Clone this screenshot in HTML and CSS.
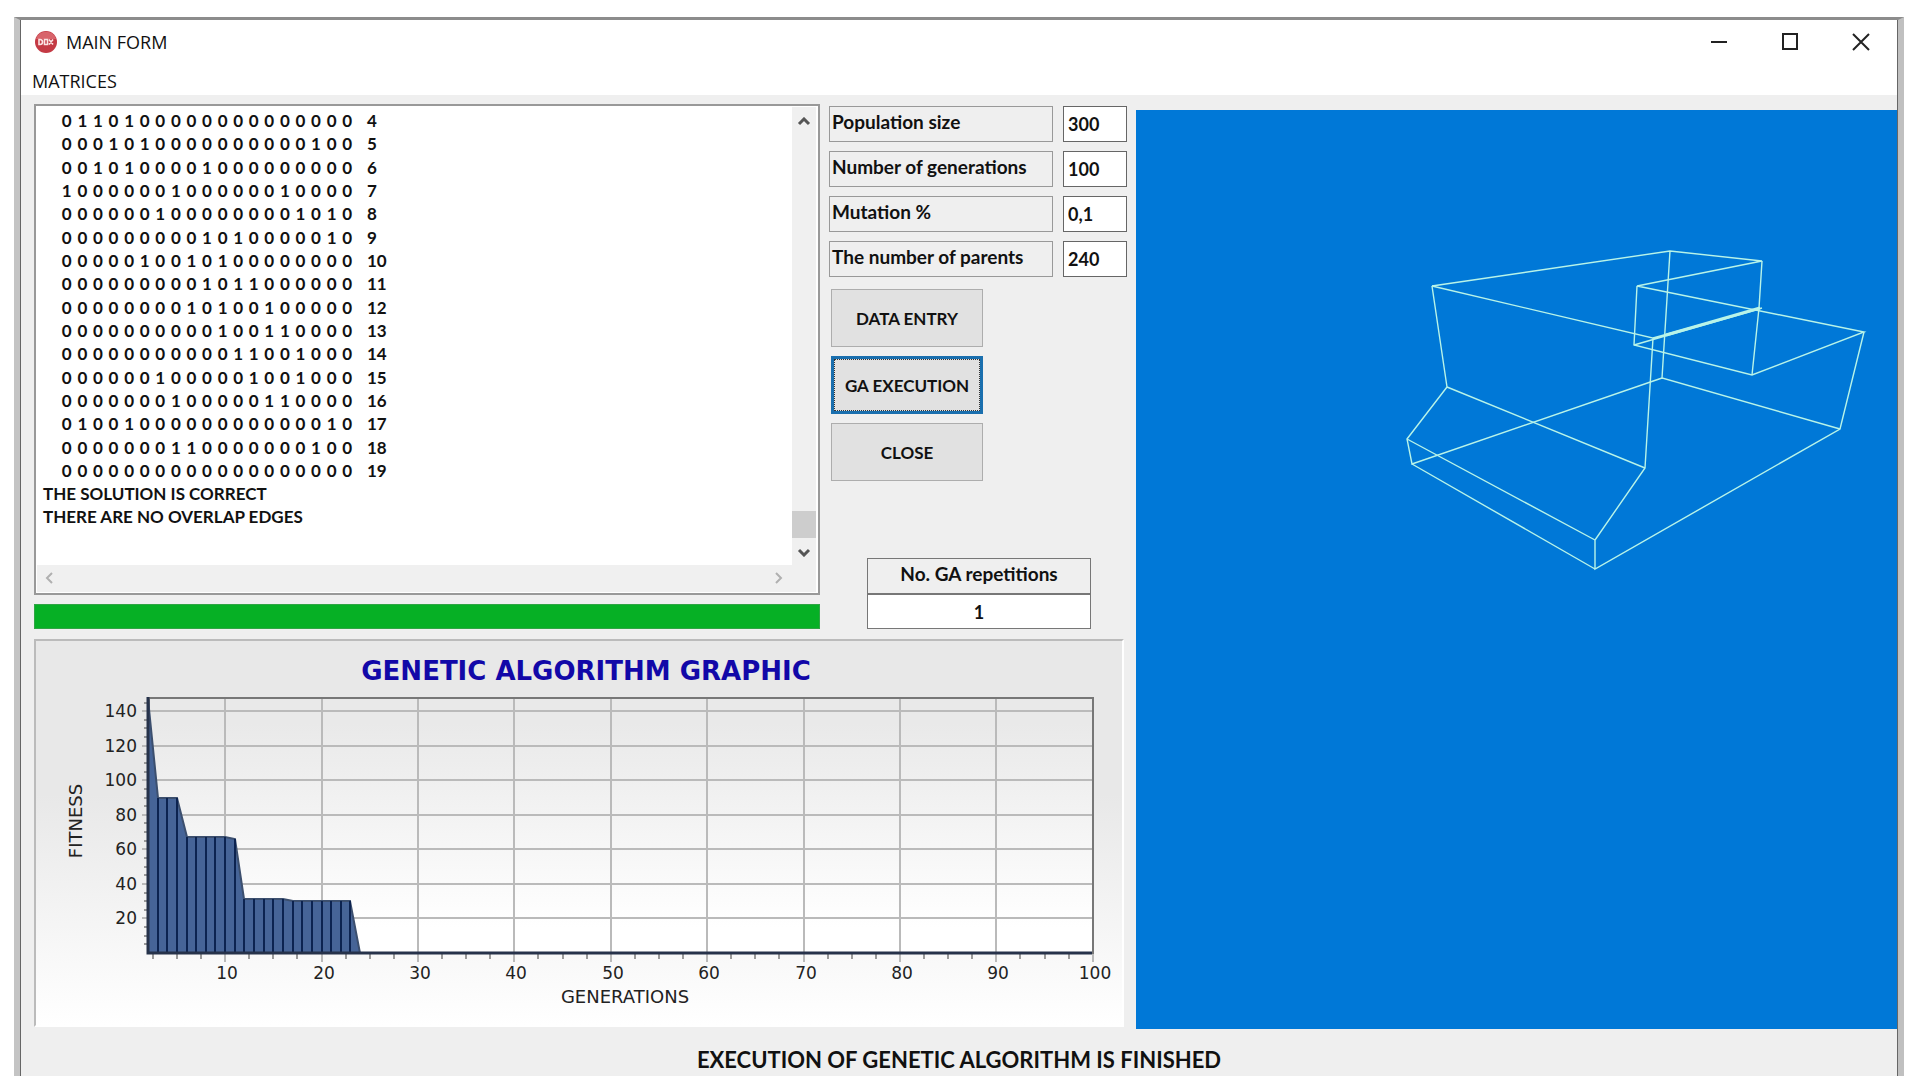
FILE: index.html
```
<!DOCTYPE html>
<html lang="en">
<head>
    <meta charset="UTF-8">
    <meta name="viewport" content="width=device-width, initial-scale=1.0">
    <title>MAIN FORM</title>
    <link rel="stylesheet" href="styles.css">
</head>
<body>
    <div class="window">
        <header class="title-bar">
            <svg class="app-icon" width="24" height="24" viewBox="0 0 24 24">
                <circle cx="12" cy="12" r="11" fill="#c43a44"/>
                <path d="M2 9a10.500 10.500 0 0 1 20 0z" fill="#d8646b"/>
                <path d="M5 9.500v5h1a2.500 2.500 0 0 0 0-5zM10.500 9.500h3v5h-3zM15 9.500l4 5M19 9.500l-4 5" fill="none" stroke="#fbe4e4" stroke-width="1.600"/>
            </svg>
            <h1>MAIN FORM</h1>
            <div class="window-buttons">
                <button type="button" aria-label="Minimize">
                    <svg width="18" height="18" viewBox="0 0 18 18"><path d="M1 9h16"/></svg>
                </button>
                <button type="button" aria-label="Maximize">
                    <svg width="18" height="18" viewBox="0 0 18 18"><path d="M2 1h14v15H2z"/></svg>
                </button>
                <button type="button" aria-label="Close">
                    <svg width="18" height="18" viewBox="0 0 18 18"><path d="M1 1l16 16M17 1L1 17"/></svg>
                </button>
            </div>
        </header>
        <nav class="menu">
            <button type="button">MATRICES</button>
        </nav>

        <main class="content">
            <div class="left">
                <div class="top">
                    <div class="output">
                        <div class="memo">
                            <div class="memo-text">
                                <table class="matrix" aria-label="Matrix">
                                    <tbody id="matrix"></tbody>
                                </table>
                                <p>THE SOLUTION IS CORRECT</p>
                                <p>THERE ARE NO OVERLAP EDGES</p>
                            </div>
                            <div class="scroll-v">
                                <svg width="14" height="9" viewBox="0 0 14 9"><path d="M2 7l5-5 5 5"/></svg>
                                <div class="thumb"></div>
                                <svg width="14" height="9" viewBox="0 0 14 9"><path d="M2 2l5 5 5-5"/></svg>
                            </div>
                            <div class="scroll-h">
                                <svg width="9" height="12" viewBox="0 0 9 12"><path d="M7 1L2 6l5 5"/></svg>
                                <svg width="9" height="12" viewBox="0 0 9 12"><path d="M2 1l5 5-5 5"/></svg>
                            </div>
                        </div>
                        <div class="progress" role="progressbar" aria-label="Progress" aria-valuenow="100"></div>
                    </div>

                    <form class="params">
                        <div class="field">
                            <label for="population">Population size</label>
                            <input type="text" id="population" value="300">
                        </div>
                        <div class="field">
                            <label for="generations">Number of generations</label>
                            <input type="text" id="generations" value="100">
                        </div>
                        <div class="field">
                            <label for="mutation">Mutation %</label>
                            <input type="text" id="mutation" value="0,1">
                        </div>
                        <div class="field">
                            <label for="parents">The number of parents</label>
                            <input type="text" id="parents" value="240">
                        </div>
                        <div class="actions">
                            <button type="button">DATA ENTRY</button>
                            <button type="button" class="active">GA EXECUTION</button>
                            <button type="button">CLOSE</button>
                        </div>
                        <div class="repetitions">
                            <label for="repetitions">No. GA repetitions</label>
                            <input type="text" id="repetitions" value="1">
                        </div>
                    </form>
                </div>

                <div class="chart">
                    <svg id="chart" viewBox="0 0 1086 384">
                        <defs>
                            <linearGradient id="wall" x1="0" y1="0" x2="0" y2="1">
                                <stop offset="0.1" stop-color="#e9e9e9"/>
                                <stop offset="0.9" stop-color="#fff"/>
                            </linearGradient>
                        </defs>
                        <text class="chart-title" x="550" y="39">GENETIC ALGORITHM GRAPHIC</text>
                        <rect x="113" y="57" width="944" height="255" fill="url(#wall)"/>
                        <g id="grid"></g>
                        <rect x="113" y="57" width="944" height="255" fill="none" stroke="#777" stroke-width="2"/>
                        <g id="series"></g>
                        <path d="M112 56v256h944" fill="none" stroke="#26324a" stroke-width="3"/>
                        <text class="axis" x="589" y="362">GENERATIONS</text>
                        <text class="axis" transform="translate(46 180) rotate(-90)">FITNESS</text>
                    </svg>
                </div>
            </div>

            <div class="view">
                <svg viewBox="0 0 761 919" preserveAspectRatio="xMinYMin meet">
                    <path d="M296 176L534 141 626 151 501 176 728 222 616 265 498 235 501 176"/>
                    <path d="M626 151L623 198 616 265M498 235L623 199M517 228L626 198"/>
                    <path class="overlap" d="M530 225L624 198"/>
                    <path d="M296 176L517 228 509 358 459 430V459L704 319 728 222"/>
                    <path d="M534 141L526 268 704 319M526 268L276 354 271 329 311 277 296 176"/>
                    <path d="M311 277L509 358M271 329L459 430M276 354L459 459"/>
                </svg>
            </div>
        </main>

        <footer class="status">EXECUTION OF GENETIC ALGORITHM IS FINISHED</footer>
    </div>

    <script>
        const rows = [
            ['0110100000000000000', 4],
            ['0001010000000000100', 5],
            ['0010100001000000000', 6],
            ['1000000100000010000', 7],
            ['0000001000000001010', 8],
            ['0000000001010000010', 9],
            ['0000010010100000000', 10],
            ['0000000001011000000', 11],
            ['0000000010100100000', 12],
            ['0000000000100110000', 13],
            ['0000000000011001000', 14],
            ['0000001000001001000', 15],
            ['0000000100000110000', 16],
            ['0100100000000000010', 17],
            ['0000000110000000100', 18],
            ['0000000000000000000', 19]
        ];

        const body = document.getElementById('matrix');
        rows.forEach(([bits, number]) => {
            const tr = body.insertRow();
            bits.split('').forEach(bit => {
                tr.insertCell().textContent = bit;
            });
            const th = document.createElement('th');
            th.scope = 'row';
            th.textContent = number;
            tr.appendChild(th);
        });

        // chart scales
        const x = g => Math.round(92.7 + g * 9.64);
        const y = v => Math.round(312 - v * 1.7275);
        const grid = document.getElementById('grid');
        const series = document.getElementById('series');
        let lines = '';

        for (let v = 5; v <= 145; v += 5) {
            if (v % 20 === 0) {
                lines += `<path class="grid-line" d="M106 ${y(v)}H1056"/>`;
                lines += `<text class="tick-y" x="101" y="${y(v) + 6}">${v}</text>`;
            } else {
                lines += `<path class="tick" d="M108 ${y(v)}h4"/>`;
            }
        }
        for (let g = 2.5; g <= 100; g += 2.5) {
            if (g % 10 === 0) {
                lines += `<path class="grid-line" d="M${x(g)} 58V321"/>`;
                lines += `<text class="tick-x" x="${x(g) + 2}" y="338">${g}</text>`;
            } else {
                lines += `<path class="tick" d="M${x(g)} 313v5"/>`;
            }
        }
        grid.innerHTML = lines;

        const fitness = [147, 90, 90, 90, 67, 67, 67, 67, 67, 66, 31, 31, 31, 31, 31, 30, 30, 30, 30, 30, 30, 30, 0];
        let area = `M${x(2)} ${y(0)}`;
        let bars = '';
        fitness.forEach((value, i) => {
            area += `L${x(i + 2)} ${y(value)}`;
            bars += `M${x(i + 2)} ${y(value)}V312`;
        });
        series.innerHTML = `<path class="area" d="${area}z"/><path class="bars" d="${bars}"/>`;
    </script>
</body>
</html>
```
FILE: styles.css
```
* {
    margin: 0;
    padding: 0;
    box-sizing: border-box;
}

body {
    background-color: #fff;
    min-height: 100vh;
    padding: 17px 13px 15px 14px;
    display: flex;
    font-family: Lato, Carlito, Calibri, sans-serif;
    color: #111;
}

button,
input {
    font: inherit;
    color: inherit;
}

.window {
    flex: 1;
    display: flex;
    flex-direction: column;
    background-color: #efefef;
    border-left: 6px solid #c4c4c4;
    border-right: 6px solid #c0c0c0;
    border-top: 3px solid #8c8c8c;
    box-shadow: inset 1px 0 #666, inset -1px 0 #666;
}

.title-bar {
    display: flex;
    align-items: center;
    height: 44px;
    margin: 0 1px;
    padding: 0 1px 0 13px;
    background-color: #fff;
}

.title-bar h1 {
    flex: 1;
    margin-left: 8px;
    font-family: "Open Sans", sans-serif;
    font-size: 18px;
    font-weight: 400;
}

.window-buttons {
    display: flex;
}

.window-buttons button {
    width: 71px;
    height: 44px;
    border: none;
    background: none;
}

.window-buttons svg {
    display: block;
    margin: 0 auto;
    fill: none;
    stroke: #222;
    stroke-width: 2;
}

.menu {
    height: 31px;
    margin: 0 1px;
    padding-left: 11px;
    background-color: #fff;
}

.menu button {
    border: none;
    background: none;
    font-family: "Open Sans", sans-serif;
    font-size: 18px;
    line-height: 34px;
}

.content {
    display: grid;
    grid-template-columns: 1093fr 761fr;
    gap: 9px;
    padding: 9px 1px 0 14px;
}

.left {
    min-width: 0;
}

.top {
    display: flex;
    gap: 9px;
    margin-bottom: 10px;
}

.output {
    flex: 1;
}

.memo {
    display: grid;
    grid-template-columns: 1fr 24px;
    grid-template-rows: 1fr 27px;
    height: 491px;
    padding: 1px 2px 1px 1px;
    background-color: #fff;
    border: 2px solid #999;
}

.memo-text {
    padding: 2px 6px;
    font-size: 17px;
    font-weight: 700;
    line-height: 23px;
}

.matrix {
    height: 373px;
    margin-left: 16px;
    border-collapse: collapse;
    table-layout: fixed;
    width: 336px;
}

.matrix td {
    text-align: center;
}

.matrix th {
    width: 40px;
    padding-left: 12px;
    text-align: left;
}

.scroll-v {
    display: flex;
    flex-direction: column;
    align-items: center;
    padding: 10px 0 8px;
    background-color: #f0f0f0;
}

.scroll-v svg,
.scroll-h svg {
    fill: none;
    stroke: #555;
    stroke-width: 3;
}

.thumb {
    width: 24px;
    height: 27px;
    margin: auto 0 10px;
    background-color: #cdcdcd;
}

.scroll-h {
    grid-column: 1 / 3;
    display: flex;
    justify-content: space-between;
    align-items: center;
    padding: 0 33px 2px 8px;
    background-color: #f0f0f0;
}

.scroll-h svg {
    stroke: #b0b0b0;
    stroke-width: 2;
}

.progress {
    height: 25px;
    margin-top: 9px;
    background-color: #06b025;
    border: 1px solid #2fa544;
}

.params {
    width: 298px;
    display: flex;
    flex-direction: column;
    padding-top: 2px;
    font-size: 18px;
    font-weight: 700;
}

.field {
    display: flex;
    gap: 10px;
    margin-bottom: 9px;
}

.field label {
    flex: 1;
    height: 36px;
    padding-left: 2px;
    border: 1px solid #999;
    font-size: 19px;
    line-height: 30px;
}

.field input {
    width: 64px;
    height: 36px;
    padding-left: 4px;
    background-color: #fff;
    border: 1px solid #666;
}

.actions {
    display: flex;
    flex-direction: column;
    gap: 9px;
    width: 152px;
    margin: 3px 0 0 2px;
}

.actions button {
    height: 58px;
    background-color: #e1e1e1;
    border: 1px solid #adadad;
    font-size: 17px;
}

.actions .active {
    border: 3px solid #1a6fae;
    outline: 1px dotted #333;
    outline-offset: -4px;
}

.repetitions {
    width: 224px;
    margin: auto 0 0 38px;
    border: 1px solid #777;
    text-align: center;
}

.repetitions label {
    display: block;
    height: 34px;
    font-size: 19px;
    line-height: 30px;
}

.repetitions input {
    display: block;
    width: 100%;
    height: 35px;
    background-color: #fff;
    border: none;
    border-top: 2px solid #777;
    text-align: center;
}

.chart {
    margin-right: 3px;
    border: 2px solid #fff;
    border-top-color: #bbb;
    border-left-color: #bbb;
    background: linear-gradient(#e8e8e8 40%, #fff);
}

.chart svg {
    display: block;
    width: 100%;
}

.chart text {
    font-family: "DejaVu Sans", Verdana, sans-serif;
    font-size: 17px;
    fill: #222;
    text-anchor: middle;
}

.chart .chart-title {
    font-size: 26px;
    font-weight: 700;
    fill: #1208a8;
}

.chart .axis {
    font-size: 18px;
}

.chart .tick-y {
    text-anchor: end;
}

.grid-line {
    stroke: #bababa;
    stroke-width: 2;
}

.tick {
    stroke: #999;
    stroke-width: 2;
}

.area {
    fill: #466497;
    stroke: #3c4f6e;
    stroke-width: 2;
}

.bars {
    fill: none;
    stroke: #0c2350;
    stroke-width: 2;
}

.view {
    margin-top: 6px;
    background-color: #0078d7;
}

.view svg {
    display: block;
    width: 100%;
    fill: none;
    stroke: #b8f4e8;
    stroke-width: 1.400;
}

.view .overlap {
    stroke-width: 3;
}

.status {
    padding-top: 17px;
    font-size: 22px;
    font-weight: 700;
    line-height: 28px;
    text-align: center;
}
```
